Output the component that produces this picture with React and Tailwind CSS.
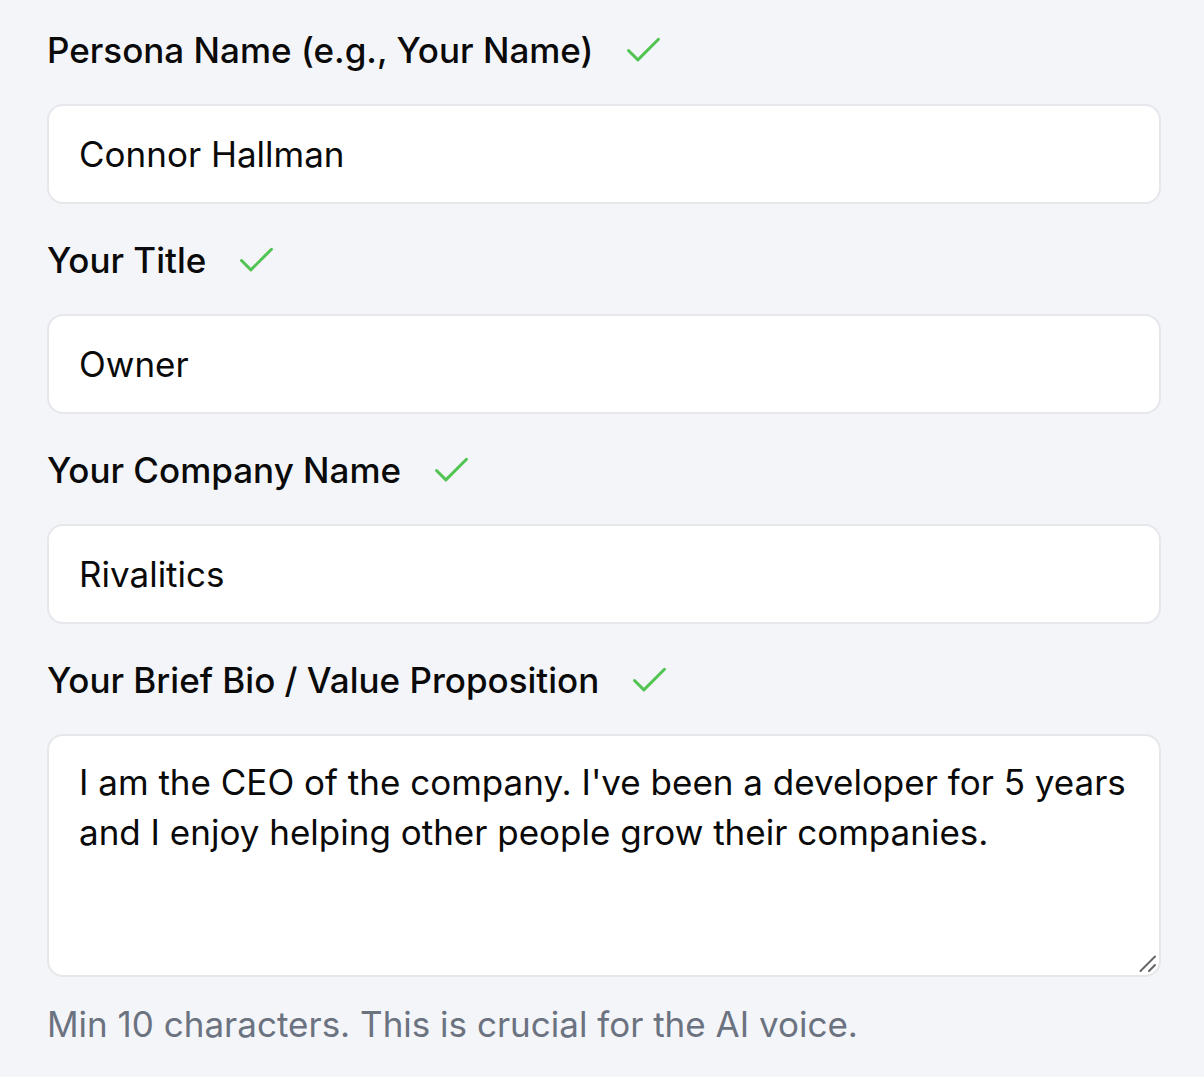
import React from "react";
import { Check } from "lucide-react";

const fields = [
  { label: "Persona Name (e.g., Your Name)", value: "Connor Hallman" },
  { label: "Your Title", value: "Owner" },
  { label: "Your Company Name", value: "Rivalitics" },
];

const Label = ({ children }) => (
  <div className="flex items-center h-[50px] mb-[29px] text-[35px] font-medium text-[#0a0a0a]">
    <span>{children}</span>
    <Check className="ml-[28px] text-[#52c454]" size={45} strokeWidth={1.6} />
  </div>
);

export default function App() {
  return (
    <div
      className="min-h-[1077px] bg-[#f4f5f9] pt-[25px]"
      style={{ fontFamily: "Inter, 'Noto Sans', sans-serif" }}
    >
      <div className="ml-[47px] w-[1114px] flex flex-col">
        {fields.map((f) => (
          <div key={f.label} className="mb-[31px]">
            <Label>{f.label}</Label>
            <input
              readOnly
              value={f.value}
              className="w-full h-[100px] bg-white border-2 border-[#e5e7eb] rounded-[16px] px-[30px] text-[35px] text-[#0a0a0a] outline-none"
            />
          </div>
        ))}
        <div>
          <Label>Your Brief Bio / Value Proposition</Label>
          <div className="relative">
            <textarea
              readOnly
              defaultValue="I am the CEO of the company. I've been a developer for 5 years and I enjoy helping other people grow their companies."
              className="block w-full h-[243px] resize-none bg-white border-2 border-[#e5e7eb] rounded-[16px] pl-[30px] pr-[20px] pt-[21px] text-[35px] leading-[50px] text-[#0a0a0a] outline-none"
            />
            {/* resize grip */}
            <svg
              className="absolute right-[3px] bottom-[3px] pointer-events-none"
              width="20"
              height="20"
              viewBox="0 0 20 20"
            >
              <path
                d="M2.5 17 L17 2.5 M11 17 L17 11"
                stroke="#666"
                strokeWidth="2"
                strokeLinecap="round"
              />
            </svg>
          </div>
          <p className="mt-[22px] text-[35px] leading-[50px] text-[#6b7280]">
            Min 10 characters. This is crucial for the AI voice.
          </p>
        </div>
      </div>
    </div>
  );
}
